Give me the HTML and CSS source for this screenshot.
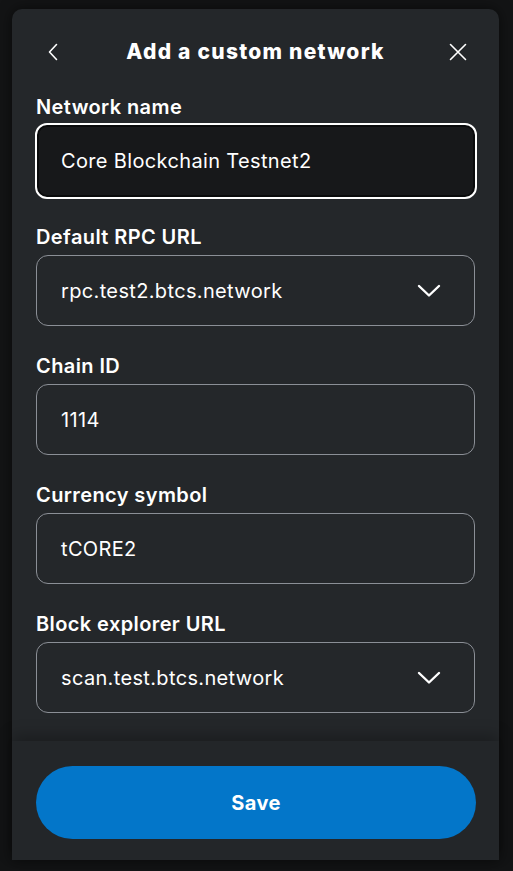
FILE: index.html
```html
<!DOCTYPE html>
<html lang="en">
<head>
<meta charset="utf-8">
<title>Add a custom network</title>
<link rel="stylesheet" href="styles.css">
</head>
<body>
<div class="modal">
  <div class="header">
    <button class="icon-btn" aria-label="Back">
      <svg width="12" height="18" viewBox="0 0 12 18"><path d="M9.5 1.5 L2.5 9 L9.5 16.5" fill="none" stroke="#fff" stroke-width="1.6" stroke-linecap="round" stroke-linejoin="round"/></svg>
    </button>
    <h1 class="title">Add a custom network</h1>
    <button class="icon-btn" aria-label="Close">
      <svg width="18" height="18" viewBox="0 0 18 18"><path d="M1.5 1.5 L16.5 16.5 M16.5 1.5 L1.5 16.5" fill="none" stroke="#fff" stroke-width="1.6" stroke-linecap="round"/></svg>
    </button>
  </div>
  <div class="body">
    <div class="field field-first">
      <div class="label">Network name</div>
      <div class="input input-focus"><span>Core Blockchain Testnet2</span></div>
    </div>
    <div class="field">
      <div class="label">Default RPC URL</div>
      <div class="input"><span>rpc.test2.btcs.network</span>
        <svg class="chev" width="24" height="14" viewBox="0 0 24 14"><path d="M2 2 L12 11.5 L22 2" fill="none" stroke="#fff" stroke-width="2.4" stroke-linecap="round" stroke-linejoin="round"/></svg>
      </div>
    </div>
    <div class="field">
      <div class="label">Chain ID</div>
      <div class="input"><span>1114</span></div>
    </div>
    <div class="field">
      <div class="label">Currency symbol</div>
      <div class="input"><span>tCORE2</span></div>
    </div>
    <div class="field">
      <div class="label">Block explorer URL</div>
      <div class="input"><span>scan.test.btcs.network</span>
        <svg class="chev" width="24" height="14" viewBox="0 0 24 14"><path d="M2 2 L12 11.5 L22 2" fill="none" stroke="#fff" stroke-width="2.4" stroke-linecap="round" stroke-linejoin="round"/></svg>
      </div>
    </div>
  </div>
  <div class="footer">
    <button class="save">Save</button>
  </div>
</div>
</body>
</html>
```
FILE: styles.css
```css
* { box-sizing: border-box; }
html, body { margin: 0; padding: 0; }
body {
  background: #131415;
  font-family: Inter, "Noto Sans", sans-serif;
  color: #fff;
  width: 513px;
  height: 871px;
  overflow: hidden;
}
.modal {
  margin: 9px 0 0 12px;
  width: 487px;
  height: 851px;
  background: #24272a;
  border-radius: 10px 10px 0 0;
  display: flex;
  flex-direction: column;
  box-shadow: 0 0 14px rgba(0,0,0,0.55);
}
.header {
  height: 84px;
  display: flex;
  align-items: center;
  justify-content: space-between;
  padding: 2px 29px 0 29px;
}
.icon-btn {
  background: none;
  border: 0;
  padding: 0;
  width: 24px;
  height: 24px;
  display: flex;
  align-items: center;
  justify-content: center;
}
.title {
  margin: 0;
  font-size: 21px;
  font-weight: 800;
  line-height: 24px;
  letter-spacing: 1.25px;
}
.body {
  flex: 1;
  padding: 3px 24px 0 24px;
}
.field { margin-bottom: 28px; }
.label {
  font-size: 20px;
  font-weight: 600;
  line-height: 24px;
  letter-spacing: 0.4px;
  margin-bottom: 6px;
}
.input {
  height: 71px;
  width: 439px;
  border: 1px solid #8b8f96;
  border-radius: 12px;
  display: flex;
  align-items: center;
  justify-content: space-between;
  padding: 0 33px 0 24px;
  font-size: 20px;
  font-weight: 400;
  letter-spacing: 0.35px;
}
.field-first { margin-bottom: 26px; }
.field-first .label { margin-bottom: 4px; }
.input-focus {
  height: 76px;
  width: 442px;
  margin-left: -1px;
  border: 2px solid #fff;
  background: #17181a;
  box-shadow: inset 0 0 0 2px #0a0b0c;
  padding-left: 24px;
}
.chev { display: block; }
.footer {
  height: 120px;
  padding: 25px 24px 0 24px;
  background: #232629;
  box-shadow: 0 -6px 14px rgba(0,0,0,0.25);
}
.save {
  width: 440px;
  height: 73px;
  border: 0;
  border-radius: 37px;
  background: #0376c9;
  color: #fff;
  font-family: Inter, "Noto Sans", sans-serif;
  font-size: 20px;
  font-weight: 700;
  letter-spacing: 0.4px;
}
```
